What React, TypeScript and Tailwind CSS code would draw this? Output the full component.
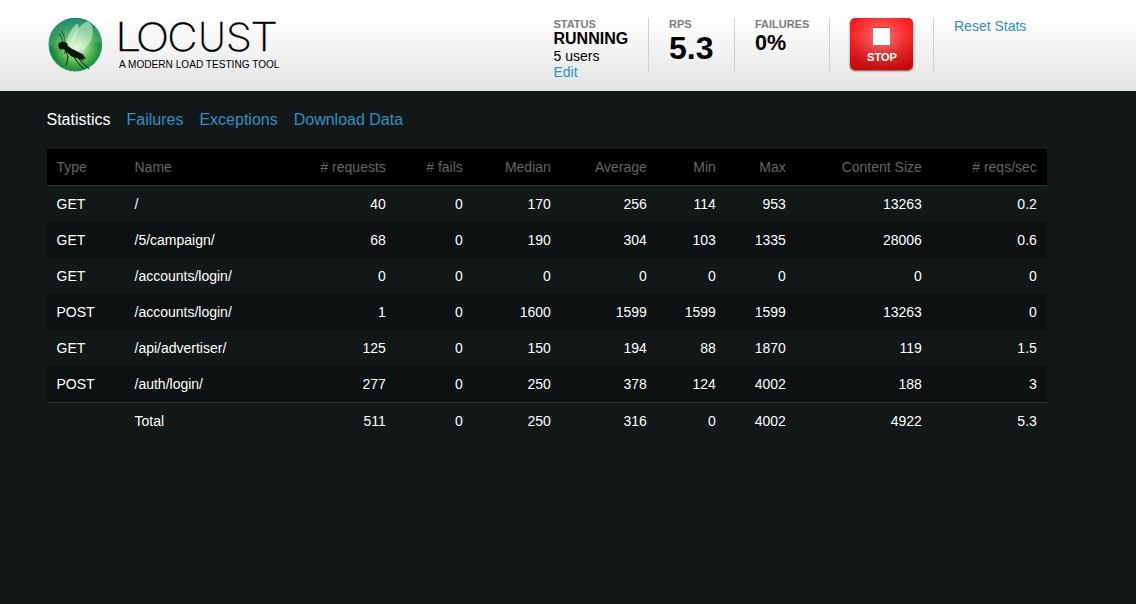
import React from "react";

const columns = [
  { label: "Type", width: "w-[78px]", left: true },
  { label: "Name", width: "w-[186px]", left: true },
  { label: "# requests", width: "w-[85px]" },
  { label: "# fails", width: "w-[77px]" },
  { label: "Median", width: "w-[88px]" },
  { label: "Average", width: "w-[96px]" },
  { label: "Min", width: "w-[69px]" },
  { label: "Max", width: "w-[70px]" },
  { label: "Content Size", width: "w-[136px]" },
  { label: "# reqs/sec", width: "w-[115px]" },
];

const rows = [
  ["GET", "/", "40", "0", "170", "256", "114", "953", "13263", "0.2"],
  ["GET", "/5/campaign/", "68", "0", "190", "304", "103", "1335", "28006", "0.6"],
  ["GET", "/accounts/login/", "0", "0", "0", "0", "0", "0", "0", "0"],
  ["POST", "/accounts/login/", "1", "0", "1600", "1599", "1599", "1599", "13263", "0"],
  ["GET", "/api/advertiser/", "125", "0", "150", "194", "88", "1870", "119", "1.5"],
  ["POST", "/auth/login/", "277", "0", "250", "378", "124", "4002", "188", "3"],
];

const total = ["", "Total", "511", "0", "250", "316", "0", "4002", "4922", "5.3"];

function Logo() {
  return (
    <svg width="240" height="60" viewBox="0 0 240 60" className="block shrink-0 overflow-visible">
      <defs>
        <radialGradient id="orb" cx="0.52" cy="0.54" r="0.52">
          <stop offset="0" stopColor="#f0ffe9" />
          <stop offset="0.25" stopColor="#b5eba9" />
          <stop offset="0.6" stopColor="#4fb550" />
          <stop offset="0.88" stopColor="#1d8a33" />
          <stop offset="1" stopColor="#0f7a40" />
        </radialGradient>
        <linearGradient id="gloss" x1="0" y1="0" x2="0.1" y2="1">
          <stop offset="0" stopColor="#1d8a7c" stopOpacity="0.9" />
          <stop offset="0.55" stopColor="#4fae84" stopOpacity="0.5" />
          <stop offset="1" stopColor="#a9e2ad" stopOpacity="0.15" />
        </linearGradient>
        <linearGradient id="rim" x1="0" y1="0" x2="0" y2="1">
          <stop offset="0" stopColor="#207b7c" />
          <stop offset="0.5" stopColor="#2ba092" />
          <stop offset="1" stopColor="#1b9a57" />
        </linearGradient>
      </defs>
      <circle cx="29.3" cy="29.6" r="26.3" fill="url(#orb)" stroke="url(#rim)" strokeWidth="1.2" />
      <path d="M3.4 30C3.4 14 15 3.6 29.3 3.6S55 14 55.2 28C46 26 36 30 28 33C20 36 11 35 3.4 30Z" fill="url(#gloss)" />
      <path d="M21 28C21 21 26 12 31.5 8.5C35 12 29 25 25 32Z" fill="#e3f8e3" opacity="0.55" />
      <path d="M24.5 33C26 20 35 8 41.5 7C48 9 48 22 42 30C38 35 32 37 26 34Z" fill="#dcf7d9" stroke="#f4fff2" strokeWidth="0.6" opacity="0.55" />
      <path d="M12.2 31L12.6 28.6L14.5 27.3L18.5 26.6L21.2 28.4L21.6 30.8L25.8 33.8L32 36.8L37 39.5L40 44L36.5 43.4L38 46L33.5 44.3L29.5 42.8L25 41.3L21.5 37.5L17.5 34.2L14 34.6L12.8 32.6Z" fill="#0e1511" />
      <path d="M15.8 27.5L15.8 23L13 18.5M18 27L18.3 22L15.5 15.7" fill="none" stroke="#18362b" strokeWidth="0.8" />
      <path d="M19.8 35L22 42L20.3 50M27 41L32 48L38 54.3M32 43L37.5 49L43.5 54M20 34L18.5 38.5" fill="none" stroke="#0e1511" strokeWidth="1" />
      <g fill="#000" stroke="#000" strokeWidth="0.3" transform="translate(0 36.1)" fontFamily="Inter, sans-serif" fontWeight="250" fontSize="39">
        <text transform="translate(68.9 0) scale(1.2 1)">L</text>
        <text transform="translate(89.8 0) scale(1.14 1)">O</text>
        <text transform="translate(121.3 0) scale(1.07 1)">C</text>
        <text transform="translate(152.2 0) scale(.97 1)">U</text>
        <text transform="translate(179.8 0) scale(1.08 1)">S</text>
        <text transform="translate(204.2 0) scale(1.14 1)">T</text>
      </g>
      <text x="73" y="53" textLength="160.5" lengthAdjust="spacingAndGlyphs" fill="#000" fontFamily="Liberation Sans, Arial, sans-serif" fontSize="10">A MODERN LOAD TESTING TOOL</text>
    </svg>
  );
}

function Label({ children }: { children: React.ReactNode }) {
  return <div className="text-[11px] leading-3 font-bold text-[#7d7d7d]">{children}</div>;
}

function Header() {
  return (
    <header className="h-[91px] bg-[linear-gradient(#ffffff_0%,#ffffff_20%,#e3e3e3_100%)] text-black">
      <div className="flex w-[1047px] items-start pl-[46px]">
        <div className="w-[507px] pt-[15px]">
          <Logo />
        </div>
        <div className="mt-[18px] flex h-[53px]">
          <section className="w-[96px] border-r border-[#cfcfcf] pl-[0.5px]">
            <Label>STATUS</Label>
            <div className="text-base leading-[17px] font-bold">RUNNING</div>
            <div className="mt-px text-sm leading-4">5 users</div>
            <a className="block text-sm leading-4 text-[#318fc5]">Edit</a>
          </section>
          <section className="w-[86px] border-r border-[#cfcfcf] pl-5">
            <Label>RPS</Label>
            <div className="mt-px text-[32px] leading-[34px] font-bold">5.3</div>
          </section>
          <section className="w-[95px] border-r border-[#cfcfcf] pl-5">
            <Label>FAILURES</Label>
            <div className="text-[22px] leading-[25px] font-bold"><span className="inline-block origin-left scale-x-[.98]">0%</span></div>
          </section>
          <section className="w-[104px] border-r border-[#cfcfcf] pl-5">
            <button className="flex h-[52px] w-[63px] flex-col items-center rounded-[5px] bg-[linear-gradient(rgba(150,0,0,0)_30%,rgba(150,0,0,.6)),radial-gradient(circle_at_50%_45%,#ff7c7c_0%,#fb2f32_60%,#fb080c_100%)] pt-[10px] text-white shadow-[0_1px_2px_rgba(90,0,0,.7)]">
              <span className="block h-[17px] w-[17px] bg-white shadow-[0_-1px_0_rgba(120,0,0,.3)]" />
              <span className="mt-[6px] pl-px text-[11px] leading-3 font-bold">STOP</span>
            </button>
          </section>
          <a className="pl-5 text-sm leading-4 text-[#318fc5]">Reset Stats</a>
        </div>
      </div>
    </header>
  );
}

function Cells({ values }: { values: string[] }) {
  return (
    <>
      {values.map((value, i) => (
        <td key={i} className={columns[i].left ? "pl-[9.5px] text-left" : "pr-[10.2px] text-right"}>
          {value}
        </td>
      ))}
    </>
  );
}

export default function App() {
  return (
    <div className="h-[604px] overflow-hidden bg-[#121818] font-['Liberation_Sans',Arial,sans-serif] text-white">
      <Header />
      <nav className="flex gap-4 pt-[19px] pl-[46.5px] text-base leading-5">
        <a className="text-white">Statistics</a>
        <a className="text-[#318fc5]">Failures</a>
        <a className="text-[#318fc5]">Exceptions</a>
        <a className="text-[#318fc5]">Download Data</a>
      </nav>
      <table className="mt-[19px] ml-[47px] w-[1000px] table-fixed border-separate border-spacing-0 text-sm leading-4">
        <thead>
          <tr className="h-[37px] bg-black text-[#666666]">
            {columns.map((c) => (
              <th key={c.label} className={`${c.width} border-b border-[#303535] font-normal whitespace-nowrap ${c.left ? "pl-[9.5px] text-left" : "pr-[10.2px] text-right"}`}>
                {c.label}
              </th>
            ))}
          </tr>
        </thead>
        <tbody>
          {rows.map((row, i) => (
            <tr key={i} className={i % 2 ? "h-9 bg-[#0d1111]" : "h-9"}>
              <Cells values={row} />
            </tr>
          ))}
        </tbody>
        <tfoot>
          <tr className="h-[37px] [&>td]:border-t [&>td]:border-[#303535]">
            <Cells values={total} />
          </tr>
        </tfoot>
      </table>
    </div>
  );
}
